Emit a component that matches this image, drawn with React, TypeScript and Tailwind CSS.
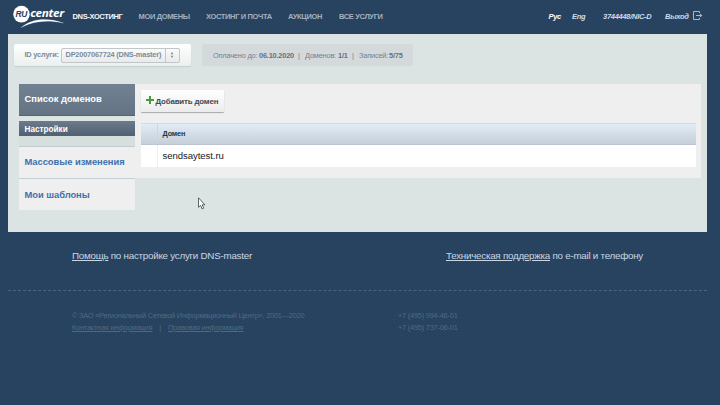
import React from "react";

type NavItem = { label: string; cls: string };

const NAV: NavItem[] = [
  { label: "DNS-ХОСТИНГ", cls: "w-[66px] text-[#f4f7fa]" },
  { label: "МОИ ДОМЕНЫ", cls: "w-[67.5px] text-[#a3b0bf]" },
  { label: "ХОСТИНГ И ПОЧТА", cls: "w-[82px] text-[#a3b0bf]" },
  { label: "АУКЦИОН", cls: "w-[51px] text-[#a3b0bf]" },
  { label: "ВСЕ УСЛУГИ", cls: "text-[#a3b0bf]" },
];

function Logo() {
  return (
    <svg width="54" height="26" viewBox="0 0 54 26" className="block shrink-0">
      <ellipse cx="8.5" cy="9.2" rx="8.2" ry="8.4" fill="#fff" />
      <text x="2.6" y="12.3" fontFamily="Liberation Sans, sans-serif" fontSize="8.2" fontWeight="700" fontStyle="italic" fill="#27425f" textLength="11.5" lengthAdjust="spacingAndGlyphs">RU</text>
      <text x="17.3" y="12" fontFamily="Open Sans, sans-serif" fontSize="10.8" fontWeight="700" fontStyle="italic" fill="#fff" textLength="33.5" lengthAdjust="spacingAndGlyphs">center</text>
      <path d="M8 22.6 C19 13.5 34 12.3 50.5 18 C34 14.7 21 15.8 8 22.6Z" fill="#fff" stroke="#fff" strokeWidth=".2" />
    </svg>
  );
}

function Header() {
  return (
    <header className="flex h-[34px] pl-[13px] pr-[17px] text-[7.5px] font-bold leading-[8px] tracking-[-0.35px]">
      <div className="w-[59.5px] pt-[5px]"><Logo /></div>
      <nav className="flex pt-[13px] whitespace-nowrap">
        {NAV.map((n) => (
          <a key={n.label} className={n.cls}>{n.label}</a>
        ))}
      </nav>
      <div className="ml-auto flex pt-[13px] italic tracking-[-0.28px] text-[#c9dcec] whitespace-nowrap">
        <a className="w-[23.5px] text-white">Рус</a>
        <a className="w-[31px]">Eng</a>
        <a className="w-[62px]">3744448/NIC-D</a>
        <a className="w-[28px]">Выход</a>
        <svg width="10" height="10" viewBox="0 0 10 10" fill="none" stroke="#a9b8c6" className="-mt-[3px]">
          <path d="M6.5 3V1.5h-6v8h6V8M3 5.5h5" />
          <path d="M6.8 3.4l2.7 2.1-2.7 2.1z" fill="#a9b8c6" stroke="none" />
        </svg>
      </div>
    </header>
  );
}

function ServiceBar() {
  return (
    <div className="flex gap-[11px] pl-[6px] text-[7.4px] leading-[8px] tracking-[-0.2px] whitespace-nowrap">
      <div className="flex h-[22px] w-[177px] items-center rounded-[2px] bg-gradient-to-b from-white to-[#eaefef] pl-[10.5px] font-bold text-[#7c8b9b] shadow-[0_1px_1px_rgba(100,120,130,0.2)]">
        <span className="w-[36px]">ID услуги:</span>
        <div className="flex h-[15px] w-[119px] items-center rounded-[2px] border border-[#c3c6c8] bg-gradient-to-b from-[#fafafa] to-[#e9eaeb]">
          <span className="flex-1 pl-[4px]">DP2007067724 (DNS-master)</span>
          <span className="flex h-full w-[14px] items-center justify-center border-l border-[#c3c6c8]">
            <svg width="4" height="6" viewBox="0 0 4 6" fill="#7c8894"><path d="M2 0l1.4 2.2H.6zM2 6L.6 3.8h2.8z" /></svg>
          </span>
        </div>
      </div>
      <div className="flex h-[22px] w-[211px] items-center rounded-[2px] bg-[#d4d9dc] pl-[11px] pt-[1px] text-[#75818d]">
        <span className="w-[46px]">Оплачено до:</span>
        <b className="w-[39px] text-[#66717c]">06.10.2020</b>
        <span className="w-[7px]">|</span>
        <span className="w-[33px]">Доменов:</span>
        <b className="w-[14px] text-[#66717c]">1/1</b>
        <span className="w-[7px]">|</span>
        <span className="w-[30px]">Записей:</span>
        <b className="text-[#66717c]">5/75</b>
      </div>
    </div>
  );
}

function Sidebar() {
  return (
    <aside className="flex w-[116px] shrink-0 flex-col font-bold whitespace-nowrap">
      <div className="flex h-[32px] items-center border-b border-[#566472] bg-gradient-to-b from-[#728292] to-[#647383] pl-[5.5px] text-[9.4px] text-white">Список доменов</div>
      <div className="h-[5px] bg-[#dce4e4]" />
      <div className="flex h-[15px] items-center bg-gradient-to-b from-[#6c7b8b] to-[#526171] pl-[5.5px] pt-[2px] text-[8.2px] leading-[10px] text-white">Настройки</div>
      <div className="h-[11px] border-b border-[#c3cdcf] bg-[#d5dfdd]" />
      <a className="flex h-[32px] items-center border-b border-[#c3cfd3] bg-[#efefef] pl-[5.5px] text-[9.4px] tracking-[-0.05px] text-[#3e72ad]">Массовые изменения</a>
      <a className="flex h-[31px] items-center bg-[#efefef] pl-[5.5px] pt-[1px] text-[9.4px] tracking-[-0.05px] text-[#3e72ad]">Мои шаблоны</a>
    </aside>
  );
}

function Domains() {
  return (
    <section className="h-[94px] w-[566px] bg-[#efefef] pl-[6px] pt-[6px]">
      <button className="flex h-[22px] w-[83px] items-center rounded-[1px] bg-gradient-to-b from-white to-[#ececec] pl-[5px] pt-[1px] text-[7.9px] font-bold tracking-[-0.16px] text-[#424950] shadow-[0_1px_1px_rgba(0,0,0,0.3)] whitespace-nowrap">
        <svg width="8" height="8" viewBox="0 0 8 8" className="mr-[1.5px] -mt-[3px] shrink-0" stroke="#4b9a3e" strokeWidth="2"><path d="M4 0v8M0 4h8" /></svg>
        Добавить домен
      </button>
      <div className="mt-[11px] w-[555px]">
        <div className="flex h-[22px] border-b border-[#bcc3d2] border-t border-t-[#cfdde8] bg-gradient-to-b from-[#e0ecf6] to-[#c6cfd8] text-[7.3px] font-bold tracking-[-0.15px] text-[#283440]">
          <div className="w-[17px] border-r border-[#cbd7e1]" />
          <div className="flex items-center pl-[4.5px]">Домен</div>
        </div>
        <div className="flex h-[22px] bg-white text-[9.6px] tracking-[-0.08px] text-[#222]">
          <div className="w-[17px] border-r border-[#efefef]" />
          <div className="flex items-center pl-[4.5px]">sendsaytest.ru</div>
        </div>
      </div>
    </section>
  );
}

function Footer() {
  return (
    <footer className="whitespace-nowrap">
      <div className="flex h-[58px] pl-[72px] pt-[18px] text-[9.8px] leading-[12px] tracking-[-0.25px] text-[#c8d6e2]">
        <p className="w-[374px]"><a className="underline">Помощь</a> по настройке услуги DNS-master</p>
        <p><a className="underline">Техническая поддержка</a> по e-mail и телефону</p>
      </div>
      <div className="ml-[8px] w-[699px] border-t border-dashed border-[#49657d]" />
      <div className="flex pl-[72px] pt-[19px] text-[7.4px] leading-[12px] tracking-[-0.22px] text-[#4d6a83]">
        <div className="w-[326px]">
          <p>© ЗАО «Региональный Сетевой Информационный Центр», 2001—2020</p>
          <p><a className="underline">Контактная информация</a><span className="mx-[7px]">|</span><a className="underline">Правовая информация</a></p>
        </div>
        <div>
          <p>+7 (495) 994-46-01</p>
          <p>+7 (495) 737-06-01</p>
        </div>
      </div>
    </footer>
  );
}

export default function App() {
  return (
    <div className="relative h-[405px] w-[720px] overflow-hidden bg-[#27425f] bg-[linear-gradient(45deg,#2a4562_25%,#26415d_25%,#26415d_50%,#2a4562_50%,#2a4562_75%,#26415d_75%)] bg-[length:4px_4px] font-['Liberation_Sans',Arial,sans-serif]">
      <Header />
      <main className="mx-[8px] h-[198px] w-[699px] bg-[#dbe4e3] pt-[10px]">
        <ServiceBar />
        <div className="flex pl-[11px] pt-[18px]">
          <Sidebar />
          <Domains />
        </div>
      </main>
      <Footer />
      <svg className="absolute left-[198px] top-[197px]" width="8" height="13" viewBox="0 0 8 13">
        <path d="M.5.8v9.5l2.1-1.9 1.5 3.5 1.6-.7-1.5-3.4h2.7z" fill="#fff" stroke="#384148" strokeWidth=".8" />
      </svg>
    </div>
  );
}
